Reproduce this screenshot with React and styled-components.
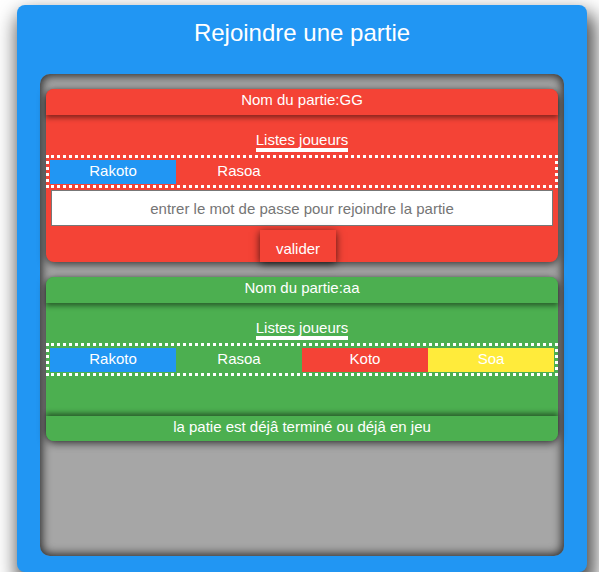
import React from 'react';
import styled, { createGlobalStyle } from 'styled-components';

const GlobalStyle = createGlobalStyle`
  html, body {
    margin: 0;
    padding: 0;
    background: #ffffff;
    font-family: 'Liberation Sans', Arial, sans-serif;
  }
`;

const parties = [
  {
    name: 'GG',
    color: '#F44336',
    open: true,
    players: [
      { name: 'Rakoto', color: '#2196F3' },
      { name: 'Rasoa', color: 'transparent' },
    ],
  },
  {
    name: 'aa',
    color: '#4CAF50',
    open: false,
    players: [
      { name: 'Rakoto', color: '#2196F3' },
      { name: 'Rasoa', color: 'transparent' },
      { name: 'Koto', color: '#F44336' },
      { name: 'Soa', color: '#FFEB3B' },
    ],
  },
];

const App = () => {
  return (
    <>
      <GlobalStyle />
      <Panel>
        <Title>Rejoindre une partie</Title>
        <List>
          {parties.map((partie) => (
            <Card key={partie.name} $bg={partie.color}>
              <CardHeader $bg={partie.color}>Nom du partie:{partie.name}</CardHeader>
              <Subtitle>
                <span>Listes joueurs</span>
              </Subtitle>
              <Players>
                {partie.players.map((p) => (
                  <Player key={p.name} $bg={p.color}>
                    {p.name}
                  </Player>
                ))}
              </Players>
              {partie.open ? (
                <>
                  <Password placeholder='entrer le mot de passe pour rejoindre la partie' />
                  <Actions>
                    <Button $bg={partie.color}>valider</Button>
                  </Actions>
                </>
              ) : (
                <>
                  <Spacer />
                  <CardFooter $bg={partie.color}>
                    la patie est déjâ terminé ou déjâ en jeu
                  </CardFooter>
                </>
              )}
            </Card>
          ))}
        </List>
      </Panel>
    </>
  );
};

const Panel = styled.div`
  box-sizing: border-box;
  width: 570px;
  height: 567px;
  margin: 5px 0 0 17px;
  padding: 14px 23px 16px;
  background: #2196f3;
  border-radius: 8px;
  box-shadow: 4px 12px 20px 4px rgba(0, 0, 0, 0.7);
  display: flex;
  flex-direction: column;
`;

const Title = styled.h1`
  margin: 0 0 27px;
  font-size: 24px;
  line-height: 28px;
  font-weight: normal;
  color: #ffffff;
  text-align: center;
`;

const List = styled.div`
  flex: 1;
  background: #a6a6a6;
  border-radius: 10px;
  padding: 15px 6px;
  box-shadow: inset 0 0 10px 2px rgba(0, 0, 0, 0.75);
  display: flex;
  flex-direction: column;
  gap: 15px;
`;

const Card = styled.div`
  background: ${(p) => p.$bg};
  border-radius: 8px;
  box-shadow: 0 2px 8px rgba(0, 0, 0, 0.7);
  color: #ffffff;
  font-size: 15px;
  line-height: 17px;
`;

const CardHeader = styled.div`
  position: relative;
  background: ${(p) => p.$bg};
  border-radius: 8px 8px 0 0;
  padding: 2px 0 7px;
  text-align: center;
  box-shadow: 0 3px 5px rgba(0, 0, 0, 0.45);
`;

const CardFooter = styled.div`
  position: relative;
  background: ${(p) => p.$bg};
  border-radius: 0 0 8px 8px;
  padding: 2px 0 6px;
  text-align: center;
  box-shadow: 0 -3px 5px rgba(0, 0, 0, 0.45);
`;

const Subtitle = styled.div`
  display: flex;
  justify-content: center;
  margin: 16px 0 3px;
  span {
    border-bottom: 4px solid #ffffff;
  }
`;

const Players = styled.div`
  display: grid;
  grid-template-columns: repeat(4, 1fr);
  border: 3px dotted #ffffff;
  padding: 2px 1px 1px;
`;

const Player = styled.div`
  background: ${(p) => p.$bg};
  padding: 2px 0 5px;
  text-align: center;
`;

const Password = styled.input`
  display: block;
  box-sizing: border-box;
  width: 98%;
  height: 36px;
  margin: 2px auto 0;
  border: 1px solid #777777;
  background: #ffffff;
  font-family: 'Liberation Sans', Arial, sans-serif;
  font-size: 15px;
  text-align: center;
  outline: none;
  &::placeholder {
    color: #757575;
  }
`;

const Actions = styled.div`
  display: flex;
  justify-content: center;
  margin-top: 4px;
  padding-right: 8px;
`;

const Button = styled.button`
  background: ${(p) => p.$bg};
  color: #ffffff;
  border: none;
  padding: 10px 16px 5px;
  font-family: 'Liberation Sans', Arial, sans-serif;
  font-size: 15px;
  line-height: 17px;
  box-shadow: 0 2px 8px rgba(0, 0, 0, 0.7);
`;

const Spacer = styled.div`
  height: 40px;
`;

export default App;
